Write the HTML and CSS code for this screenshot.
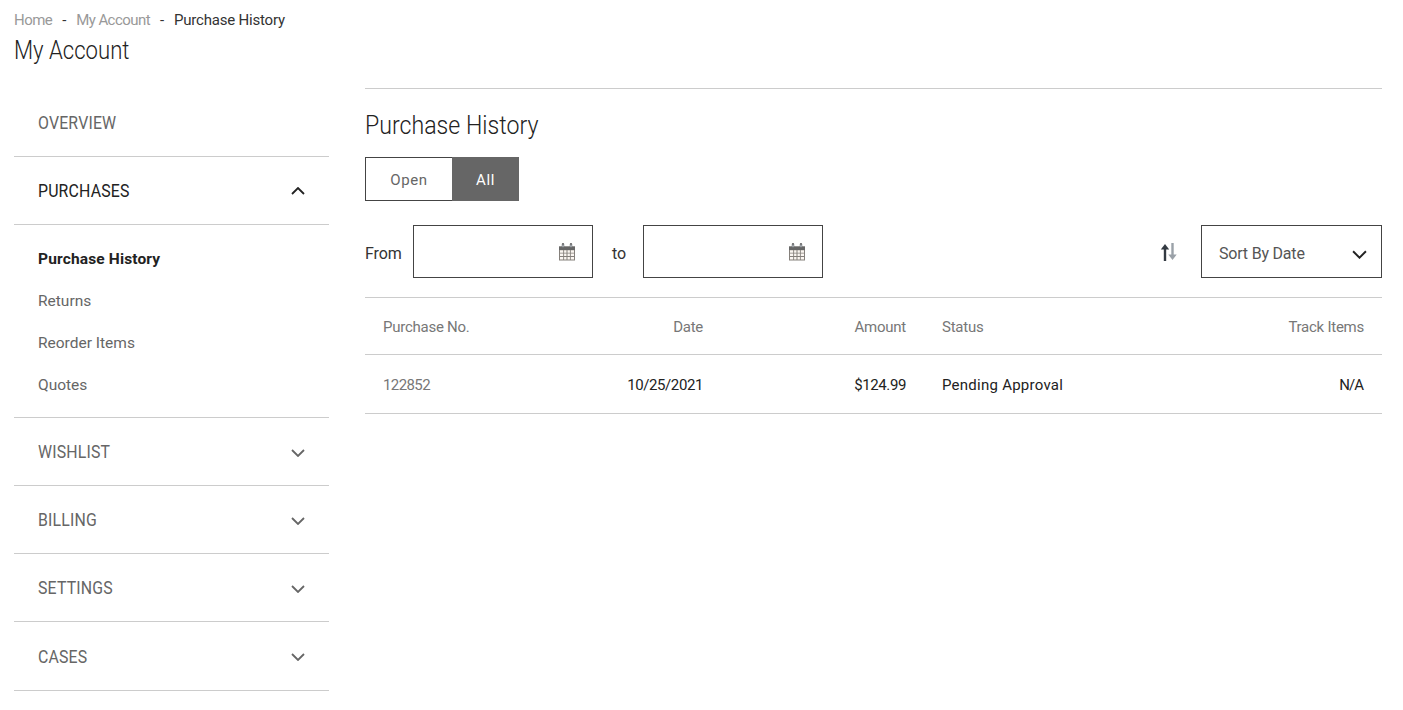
FILE: index.html
```html
<!DOCTYPE html>
<html lang="en">
<head>
<meta charset="utf-8">
<title>Purchase History</title>
<link rel="stylesheet" href="styles.css">
</head>
<body>
<svg class="defs" width="0" height="0" aria-hidden="true">
  <symbol id="cal" viewBox="0 0 18 18">
    <path d="M1 3.5h16v14H1z" fill="#85807b"/>
    <path d="M1 3.5h16V7H1z" fill="#666"/>
    <path d="M5 1.2v3.4M13 1.2v3.4" stroke="#666" stroke-width="2.4" stroke-linecap="round" fill="none"/>
    <path d="M5 1.6v2.6M13 1.6v2.6" stroke="#c9d4de" stroke-width="1" fill="none"/>
    <path d="M2 7.2h3.2v2.5H2zM6.1 7.2h2.4v2.5H6.1zM9.5 7.2h2.4v2.5H9.5zM12.8 7.2H16v2.5h-3.2zM2 10.6h3.2v2.5H2zM6.1 10.6h2.4v2.5H6.1zM9.5 10.6h2.4v2.5H9.5zM12.8 10.6H16v2.5h-3.2zM2 14h3.2v2.5H2zM6.1 14h2.4v2.5H6.1zM9.5 14h2.4v2.5H9.5zM12.8 14H16v2.5h-3.2z" fill="#fbf6f1"/>
  </symbol>
  <symbol id="chev" viewBox="0 0 14 8">
    <path d="M1 1l6 6 6-6" fill="none" stroke="currentColor" stroke-width="1.8"/>
  </symbol>
</svg>
<header class="page-head">
  <nav class="crumbs">
    <a class="crumb">Home</a><span class="sep">-</span><a class="crumb">My Account</a><span class="sep">-</span><span class="current">Purchase History</span>
  </nav>
  <h1><span class="narrow">My Account</span></h1>
</header>
<div class="layout">
  <aside class="side">
    <div class="nav-row"><span class="narrow">OVERVIEW</span></div>
    <div class="nav-row active"><span class="narrow">PURCHASES</span><svg class="chev up"><use href="#chev"/></svg></div>
    <ul class="subnav">
      <li class="on">Purchase History</li>
      <li>Returns</li>
      <li>Reorder Items</li>
      <li>Quotes</li>
    </ul>
    <div class="nav-row"><span class="narrow">WISHLIST</span><svg class="chev"><use href="#chev"/></svg></div>
    <div class="nav-row"><span class="narrow">BILLING</span><svg class="chev"><use href="#chev"/></svg></div>
    <div class="nav-row"><span class="narrow">SETTINGS</span><svg class="chev"><use href="#chev"/></svg></div>
    <div class="nav-row last"><span class="narrow">CASES</span><svg class="chev"><use href="#chev"/></svg></div>
  </aside>
  <main class="main">
    <h2><span class="narrow">Purchase History</span></h2>
    <div class="toggle"><button class="t-open">Open</button><button class="t-all">All</button></div>
    <div class="filters">
      <label class="lbl">From</label>
      <div class="date"><svg class="cal"><use href="#cal"/></svg></div>
      <label class="lbl to">to</label>
      <div class="date"><svg class="cal"><use href="#cal"/></svg></div>
      <svg class="sort-icon" viewBox="0 0 17 18" aria-hidden="true">
        <path d="M5 18V4" stroke="#333a42" stroke-width="2.4" fill="none"/>
        <path d="M0.8 6.5L5 1l4.2 5.5z" fill="#333a42"/>
        <path d="M12.5 0v14" stroke="#9aa1a8" stroke-width="2.4" fill="none"/>
        <path d="M8.3 11.5l4.2 5.5 4.2-5.5z" fill="#9aa1a8"/>
      </svg>
      <div class="select"><span>Sort By Date</span><svg class="chev dark"><use href="#chev"/></svg></div>
    </div>
    <div class="table">
      <div class="tr th">
        <div class="c-no">Purchase No.</div>
        <div class="c-date">Date</div>
        <div class="c-amt">Amount</div>
        <div class="c-status">Status</div>
        <div class="c-track">Track Items</div>
      </div>
      <div class="tr td">
        <div class="c-no muted num-tight">122852</div>
        <div class="c-date num">10/25/2021</div>
        <div class="c-amt num">$124.99</div>
        <div class="c-status wide">Pending Approval</div>
        <div class="c-track tight">N/A</div>
      </div>
    </div>
  </main>
</div>
</body>
</html>
```
FILE: styles.css
```css
* { box-sizing: border-box; }
html, body { margin: 0; height: 100%; overflow: hidden; }
body {
  background: #fff;
  color: #222;
  font-family: Roboto, "Liberation Sans", sans-serif;
  font-size: 15px;
  padding: 10px 21px 0 14px;
}
.defs { position: absolute; }
.narrow { display: inline-block; transform-origin: left center; transform: scaleX(0.88); white-space: nowrap; }
.crumbs { height: 20px; line-height: 20px; font-size: 15px; color: #999; letter-spacing: -0.2px; }
.crumbs .crumb { letter-spacing: -0.55px; }
.crumbs .sep { color: #333; margin: 0 10px; }
.crumbs .current { color: #333; }
h1 { margin: 3px 0 0; font-size: 26px; line-height: 34px; font-weight: 300; color: #222; }
h1 .narrow { transform: scaleX(0.85); }
h2 .narrow { transform: scaleX(0.89); }
.layout { display: flex; margin-top: 21px; gap: 36px; }
.side { width: 315px; flex: none; padding-top: 1px; }
.nav-row {
  height: 68px;
  display: flex;
  align-items: center;
  justify-content: space-between;
  padding: 0 24px;
  border-bottom: 1px solid #ccc;
  font-size: 18px;
  color: #666;
  letter-spacing: 0.2px;
}
.nav-row.active { color: #222; }
.nav-row.last { height: 69px; }
.chev { width: 14px; height: 8px; color: #666; position: relative; top: 1px; }
.chev.up { transform: rotate(180deg); color: #222; top: 0; }
.chev.dark { width: 15px; height: 9px; color: #222; top: 1px; }
.subnav { list-style: none; margin: 0; padding: 13px 24px 11px; border-bottom: 1px solid #ccc; }
.subnav li { height: 42px; line-height: 42px; font-size: 15.5px; color: #666; }
.subnav li.on { color: #222; font-weight: 700; letter-spacing: 0.15px; }
.main { flex: 1; border-top: 1px solid #ccc; }
h2 { margin: 18px 0 0; font-size: 26px; line-height: 36px; font-weight: 300; color: #222; }
.toggle { display: flex; margin-top: 14px; height: 44px; }
button { font: inherit; letter-spacing: 0.6px; cursor: pointer; padding: 2px 0 0; }
.t-open { width: 87px; background: #fff; border: 1px solid #444; border-right: 0; color: #666; }
.t-all { width: 67px; background: #666; border: 1px solid #666; color: #fff; }
.filters { display: flex; align-items: center; margin-top: 24px; height: 53px; }
.lbl { font-size: 16px; color: #333; width: 48px; padding-top: 3px; letter-spacing: -0.1px; }
.lbl.to { width: 50px; text-align: left; padding-left: 19px; }
.date { width: 180px; height: 53px; border: 1px solid #444; display: flex; align-items: center; justify-content: flex-end; padding-right: 16px; }
.cal { width: 18px; height: 18px; }
.sort-icon { width: 17px; height: 18px; margin-left: auto; margin-right: 24px; }
.select { width: 181px; height: 53px; border: 1px solid #444; display: flex; align-items: center; justify-content: space-between; padding: 4px 14px 0 17px; font-size: 16px; color: #555; letter-spacing: -0.2px; }
.table { margin-top: 19px; border-top: 1px solid #ccc; }
.tr { display: flex; align-items: center; padding: 2px 18px 0; border-bottom: 1px solid #ccc; font-size: 15px; letter-spacing: -0.25px; }
.th { height: 57px; color: #777; }
.td { height: 59px; color: #222; }
.c-no { width: 172px; }
.c-date { width: 148px; text-align: right; }
.c-amt { width: 203px; text-align: right; }
.c-status { padding-left: 36px; flex: 1; }
.c-track { text-align: right; }
.muted { color: #777; }
.num { letter-spacing: -0.4px; }
.num-tight { letter-spacing: -0.6px; }
.wide { letter-spacing: 0.25px; }
.tight { letter-spacing: -1px; padding-right: 1px; }
```
